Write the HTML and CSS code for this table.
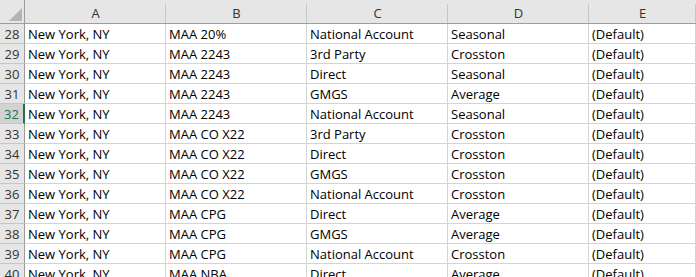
FILE: index.html
```html
<!DOCTYPE html>
<html>
<head>
<meta charset="utf-8">
<link rel="stylesheet" href="styles.css">
</head>
<body>
<div class="sheet">
  <div class="corner"><span class="tri"></span></div>
  <div class="colhead">A</div>
  <div class="colhead">B</div>
  <div class="colhead">C</div>
  <div class="colhead">D</div>
  <div class="colhead">E</div>

  <div class="rowhead">28</div><div class="cell">New York, NY</div><div class="cell">MAA 20%</div><div class="cell">National Account</div><div class="cell">Seasonal</div><div class="cell">(Default)</div>
  <div class="rowhead">29</div><div class="cell">New York, NY</div><div class="cell">MAA 2243</div><div class="cell">3rd Party</div><div class="cell">Crosston</div><div class="cell">(Default)</div>
  <div class="rowhead">30</div><div class="cell">New York, NY</div><div class="cell">MAA 2243</div><div class="cell">Direct</div><div class="cell">Seasonal</div><div class="cell">(Default)</div>
  <div class="rowhead">31</div><div class="cell">New York, NY</div><div class="cell">MAA 2243</div><div class="cell">GMGS</div><div class="cell">Average</div><div class="cell">(Default)</div>
  <div class="rowhead selected">32</div><div class="cell">New York, NY</div><div class="cell">MAA 2243</div><div class="cell">National Account</div><div class="cell">Seasonal</div><div class="cell">(Default)</div>
  <div class="rowhead">33</div><div class="cell">New York, NY</div><div class="cell">MAA CO X22</div><div class="cell">3rd Party</div><div class="cell">Crosston</div><div class="cell">(Default)</div>
  <div class="rowhead">34</div><div class="cell">New York, NY</div><div class="cell">MAA CO X22</div><div class="cell">Direct</div><div class="cell">Crosston</div><div class="cell">(Default)</div>
  <div class="rowhead">35</div><div class="cell">New York, NY</div><div class="cell">MAA CO X22</div><div class="cell">GMGS</div><div class="cell">Crosston</div><div class="cell">(Default)</div>
  <div class="rowhead">36</div><div class="cell">New York, NY</div><div class="cell">MAA CO X22</div><div class="cell">National Account</div><div class="cell">Crosston</div><div class="cell">(Default)</div>
  <div class="rowhead">37</div><div class="cell">New York, NY</div><div class="cell">MAA CPG</div><div class="cell">Direct</div><div class="cell">Average</div><div class="cell">(Default)</div>
  <div class="rowhead">38</div><div class="cell">New York, NY</div><div class="cell">MAA CPG</div><div class="cell">GMGS</div><div class="cell">Average</div><div class="cell">(Default)</div>
  <div class="rowhead">39</div><div class="cell">New York, NY</div><div class="cell">MAA CPG</div><div class="cell">National Account</div><div class="cell">Crosston</div><div class="cell">(Default)</div>
  <div class="rowhead">40</div><div class="cell">New York, NY</div><div class="cell">MAA NBA</div><div class="cell">Direct</div><div class="cell">Average</div><div class="cell">(Default)</div>
</div>
</body>
</html>
```

FILE: styles.css
```css
html, body {
  margin: 0;
  padding: 0;
  background: #ffffff;
  overflow: hidden;
}
.sheet {
  display: grid;
  grid-template-columns: 25px repeat(4, 141px) 1fr;
  grid-template-rows: 24px;
  grid-auto-rows: 20px;
  width: 696px;
  font-family: "Open Sans", "Liberation Sans", sans-serif;
  font-size: 13px;
  color: #000;
}
.corner {
  background: #e6e6e6;
  border-right: 1px solid #9e9e9e;
  border-bottom: 1px solid #9e9e9e;
  box-sizing: border-box;
  position: relative;
}
.tri {
  position: absolute;
  right: 2px;
  bottom: 2px;
  width: 0;
  height: 0;
  border-left: 13px solid transparent;
  border-bottom: 13px solid #b4b4b4;
}
.colhead {
  background: #e6e6e6;
  border-bottom: 1px solid #9e9e9e;
  box-sizing: border-box;
  display: flex;
  align-items: flex-end;
  justify-content: center;
  padding-bottom: 1px;
  color: #333;
  background-image: linear-gradient(#c6c6c6, #c6c6c6);
  background-size: 1px 19px;
  background-position: right bottom;
  background-repeat: no-repeat;
}
.rowhead {
  background: #e6e6e6;
  border-right: 1px solid #9e9e9e;
  border-bottom: 1px solid #c6c6c6;
  box-sizing: border-box;
  display: flex;
  align-items: flex-end;
  justify-content: center;
  padding-bottom: 0;
  color: #333;
}
.rowhead.selected {
  background: #d2d2d2;
  color: #217346;
  border-right: 2px solid #217346;
}
.cell {
  border-right: 1px solid #d4d4d4;
  border-bottom: 1px solid #d4d4d4;
  box-sizing: border-box;
  display: flex;
  align-items: flex-end;
  padding: 0 0 0 3px;
  white-space: nowrap;
  overflow: hidden;
}
```
